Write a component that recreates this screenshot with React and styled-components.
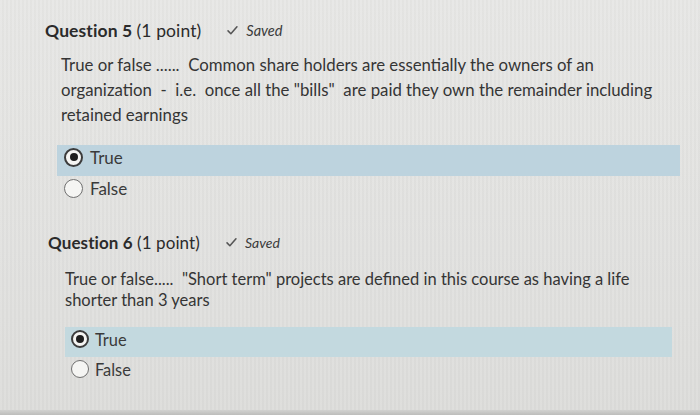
import React from "react";
import styled, { createGlobalStyle } from "styled-components";

const Global = createGlobalStyle`
  html, body { margin: 0; padding: 0; }
  body {
    width: 700px;
    height: 415px;
    overflow: hidden;
    background: #e2e2e0;
    font-family: Lato, "Open Sans", sans-serif;
    color: #333;
  }
`;

const Page = styled.div`
  width: 700px;
  height: 415px;
  box-sizing: border-box;
  display: flex;
  flex-direction: column;
  background:
    repeating-linear-gradient(90deg, rgba(255,255,255,0.06) 0 2px, rgba(0,0,0,0.015) 2px 4px),
    linear-gradient(180deg, #e7e7e5 0%, #e1e1df 60%, #dcdcda 100%);
`;

const Question = styled.section`
  display: flex;
  flex-direction: column;
  padding-left: ${(p) => p.$left}px;
  padding-right: ${(p) => p.$right}px;
  margin-top: ${(p) => p.$top}px;
`;

const TitleRow = styled.div`
  display: flex;
  align-items: center;
  height: ${(p) => p.$h}px;
`;

const Title = styled.h2`
  margin: 0;
  font-size: ${(p) => p.$size}px;
  font-weight: 700;
  color: #2b2b2b;
  white-space: nowrap;
  letter-spacing: 0.1px;
  span { font-weight: 400; }
`;

const Saved = styled.span`
  display: inline-flex;
  align-items: center;
  gap: 7px;
  margin-left: ${(p) => p.$gap}px;
  font-style: italic;
  font-size: ${(p) => p.$size}px;
  color: #3a3a3a;
  svg { width: 13px; height: 13px; }
`;

const Body = styled.p`
  margin: ${(p) => p.$mt}px 0 0 ${(p) => p.$indent}px;
  font-size: ${(p) => p.$size}px;
  line-height: ${(p) => p.$lh}px;
  color: #353535;
  white-space: pre;
`;

const Options = styled.div`
  display: flex;
  flex-direction: column;
  margin-top: ${(p) => p.$mt}px;
  margin-left: ${(p) => p.$indent}px;
`;

const Option = styled.label`
  box-sizing: border-box;
  display: flex;
  align-items: center;
  gap: ${(p) => p.$gap}px;
  height: ${(p) => p.$h}px;
  padding: 0 0 ${(p) => p.$pb}px ${(p) => p.$pl}px;
  font-size: ${(p) => p.$size}px;
  color: #3a3a3a;
  background: ${(p) => (p.$selected ? p.$hl : "transparent")};
`;

const Radio = styled.span`
  box-sizing: border-box;
  flex: none;
  width: ${(p) => p.$d}px;
  height: ${(p) => p.$d}px;
  border-radius: 50%;
  border: ${(p) => (p.$checked ? "2px solid #3c3c3c" : "1.3px solid #707070")};
  background: #f5f5f3;
  display: flex;
  align-items: center;
  justify-content: center;
  &::after {
    content: "";
    width: ${(p) => Math.round(p.$d * 0.42)}px;
    height: ${(p) => Math.round(p.$d * 0.42)}px;
    border-radius: 50%;
    background: ${(p) => (p.$checked ? "#1e1e1e" : "transparent")};
  }
`;

const BottomEdge = styled.div`
  margin-top: auto;
  height: 5px;
  background: linear-gradient(180deg, #d2d2d0, #bdbdbb);
`;

const Check = () => (
  <svg viewBox="0 0 16 16" fill="none" stroke="#555" strokeWidth="1.9" strokeLinecap="round" strokeLinejoin="round">
    <path d="M2.5 8.5 L6 12 L13.5 3.5" />
  </svg>
);

const questions = [
  {
    n: 5,
    top: 18,
    left: 45,
    right: 20,
    titleSize: 17.5,
    titleH: 24,
    gap: 25,
    savedSize: 14.5,
    bodyMt: 10,
    indent: 16,
    bodySize: 16.8,
    lh: 25,
    lines: [
      "True or false ......  Common share holders are essentially the owners of an",
      'organization  -  i.e.  once all the "bills"  are paid they own the remainder including',
      "retained earnings",
    ],
    optMt: 18,
    optIndent: 12,
    optH: 31,
    optPb: 7,
    optPl: 7,
    optGap: 7,
    optSize: 17,
    radio: 19,
    hl: "#bdd3de",
  },
  {
    n: 6,
    top: 23,
    left: 48,
    right: 28,
    titleSize: 17,
    titleH: 24,
    gap: 25,
    savedSize: 14,
    bodyMt: 15,
    indent: 17,
    bodySize: 16.5,
    lh: 21,
    lines: [
      'True or false.....  "Short term" projects are defined in this course as having a life',
      "shorter than 3 years",
    ],
    optMt: 16,
    optIndent: 17,
    optH: 30,
    optPb: 6,
    optPl: 6,
    optGap: 6,
    optSize: 16.4,
    radio: 18,
    hl: "#c3d9df",
  },
];

export default function App() {
  return (
    <>
      <Global />
      <Page>
        {questions.map((q) => (
          <Question key={q.n} $left={q.left} $right={q.right} $top={q.top}>
            <TitleRow $h={q.titleH}>
              <Title $size={q.titleSize}>
                Question {q.n} <span>(1 point)</span>
              </Title>
              <Saved $size={q.savedSize} $gap={q.gap}>
                <Check />
                Saved
              </Saved>
            </TitleRow>
            <Body $mt={q.bodyMt} $indent={q.indent} $size={q.bodySize} $lh={q.lh}>
              {q.lines.map((l, i) => (
                <React.Fragment key={i}>
                  {l}
                  {i < q.lines.length - 1 && <br />}
                </React.Fragment>
              ))}
            </Body>
            <Options $mt={q.optMt} $indent={q.optIndent}>
              <Option $selected $hl={q.hl} $h={q.optH} $pb={q.optPb} $pl={q.optPl} $gap={q.optGap} $size={q.optSize}>
                <Radio $d={q.radio} $checked />
                True
              </Option>
              <Option $h={q.optH} $pb={q.optPb} $pl={q.optPl} $gap={q.optGap} $size={q.optSize}>
                <Radio $d={q.radio} />
                False
              </Option>
            </Options>
          </Question>
        ))}
        <BottomEdge />
      </Page>
    </>
  );
}
